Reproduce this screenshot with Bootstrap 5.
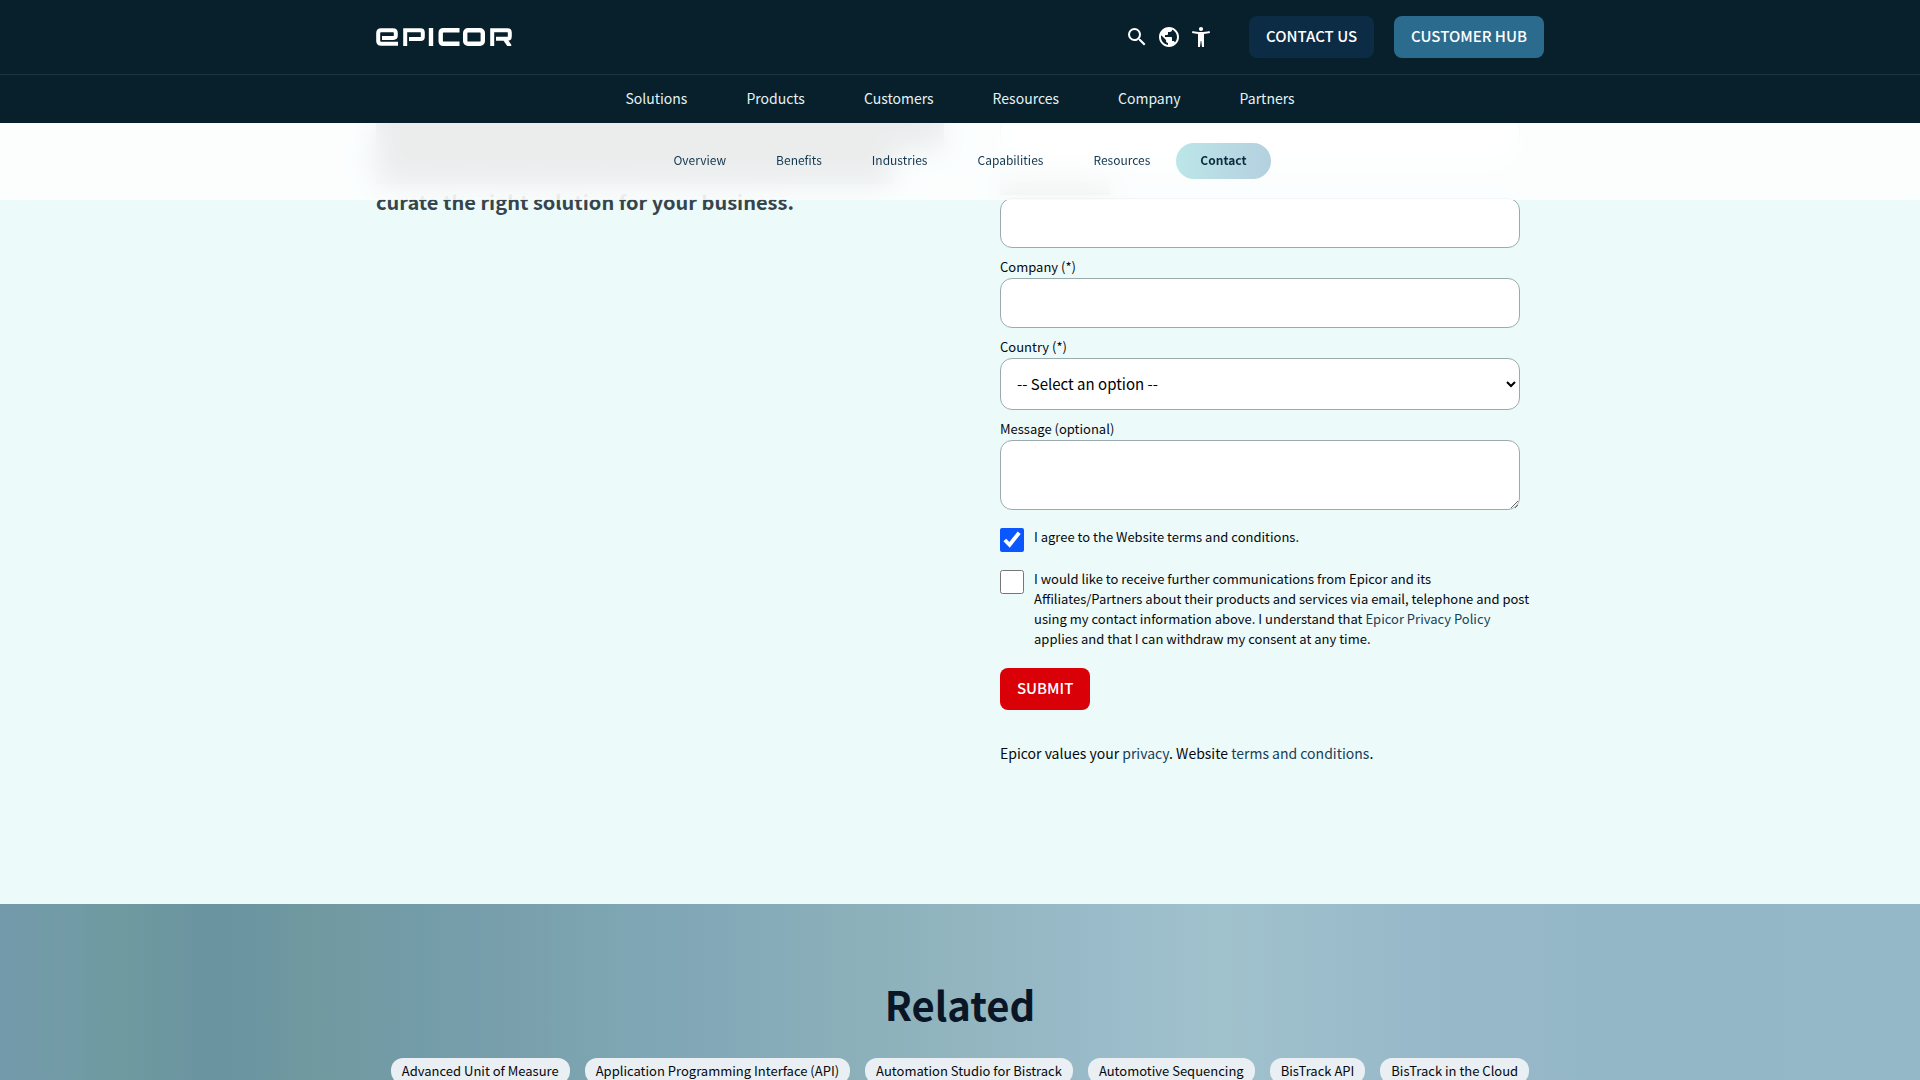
<!DOCTYPE html>
<html lang="en">
<head>
<meta charset="utf-8">
<meta name="viewport" content="width=device-width, initial-scale=1">
<title>Epicor BisTrack | Contact</title>
<link href="https://cdn.jsdelivr.net/npm/bootstrap@5.3.0/dist/css/bootstrap.min.css" rel="stylesheet">
<style>
  body { font-family: "Noto Sans CJK SC", "Noto Sans", sans-serif; font-size: 14px; line-height: 20px; color: #05090c; background: #edfafa; }
  a { color: #163f59; text-decoration: none; }
  .site-wrap { max-width: 1200px; }
  .site-header { background: #07202b; }
  .top-row { height: 75px; border-bottom: 1px solid #1c343f; }
  .icon-btn { width: 24px; height: 24px; color: #fff; }
  .icon-btn svg { display: block; fill: currentColor; }
  .cta { height: 42px; padding: 0 17px; border-radius: 8px; border: 0; font-size: 15px; font-weight: 500; line-height: 40px; color: #fff; }
  button.cta { padding-bottom: 2px; }
  .cta:hover { color: #fff; }
  .cta-navy { background: #0c2c45; }
  .cta-blue { background: #2a6b8e; }
  .cta-red { background: #d90007; }
  .main-menu { height: 48px; padding-bottom: 2px; gap: 59px; font-size: 14px; }
  .main-menu a { color: #e4f2f5; }
  .sub-menu { height: 77px; padding-bottom: 2px; gap: 2px; font-size: 12px; background: rgba(255, 255, 255, .8); backdrop-filter: blur(14px); }
  .sub-menu a { color: #12374e; line-height: 34px; padding: 0 24px 2px; border-radius: 18px; }
  .sub-menu a.active { font-weight: 700; color: #0b2b40; background: linear-gradient(90deg, #bce6e8, #b4d0df); }
  .contact-area { min-height: 904px; }
  .pitch-col { padding-top: 112px; }
  .haze { height: 38px; background: #99a3a5; }
  .haze-short { width: 91%; height: 34px; }
  .haze-label { width: 110px; height: 14px; margin: 13px 0 3px; background: #bcc3c5; }
  .pitch { font-size: 20px; line-height: 36px; font-weight: 700; color: #36444b; }
  .form-col { padding: 118px 40px 0; }
  .field-label { display: block; font-size: 13px; margin-top: 10px; padding-bottom: 2px; line-height: 18px; }
  .field { display: block; width: 100%; height: 50px; background: #fff; border: 1px solid #9aabaf; border-radius: 12px; padding: 0 16px; font-size: 15px; color: #000; }
  select.field { height: 52px; padding: 0 0 2px 12px; }
  textarea.field { height: 70px; padding: 12px 16px; }
  .tick-row { gap: 10px; margin: 18px 0; }
  .tick { width: 24px; height: 24px; margin: 0; flex: none; accent-color: #0b57ff; }
  .tick-label { font-size: 13px; line-height: 20px; margin: -1px -12px 1px 0; }
  .note { font-size: 14px; line-height: 22px; margin-top: 32px; }
  .related { background: linear-gradient(90deg, #7399aa 0, #719ba6 70px, #6f9a9f 120px, #6b94a1 200px, #6b95a1 250px, #70999f 310px, #739ca9 420px, #7a9fad 530px, #7ba4b0 580px, #82a8b8 700px, #8bb0ba 850px, #92b5c0 960px, #9abbc9 1100px, #a0c2cd 1220px, #9bbcca 1340px, #97b8c9 1450px, #94b7c7 1600px, #95b8c8 100%); min-height: 190px; padding-top: 69px; }
  .related h2 { font-size: 40px; line-height: 62px; font-weight: 700; color: #0a1526; margin-bottom: 23px; }
  .tag-list { gap: 15px; }
  .tag-list a { background: #e9eff3; color: #05090c; border-radius: 12px; padding: 3px 11px; font-size: 13px; line-height: 20px; }
</style>
</head>
<body class="vh-100 overflow-hidden">

<header class="fixed-top">
  <div class="site-header">
    <div class="top-row">
      <div class="site-wrap container-fluid h-100 px-3 d-flex align-items-center">
        <a href="#" class="me-auto" aria-label="Epicor">
          <svg class="d-block" width="136" height="18" viewBox="0 0 136 18" fill="none" stroke="#fff" stroke-width="4.4">
            <path d="M22 15.800H5q-2.800 0-2.800-2.800V5q0-2.800 2.800-2.800H17q2.800 0 2.800 2.800v2.500q0 2.400-2.400 2.400H6" stroke-width="4"/>
            <path d="M29.200 18V2.200H44.500q2.300 0 2.300 2.300v4.200q0 2.300-2.300 2.300H33" stroke-width="4"/>
            <path d="M55 0v18"/>
            <path d="M83.500 2.200H67.500q-2.800 0-2.800 2.800v8q0 2.800 2.800 2.800h16"/>
            <rect x="89.200" y="2.200" width="17.600" height="13.600" rx="2.800"/>
            <path d="M116.200 18V2.200H131.500q2.300 0 2.300 2.300v4q0 2.300-2.300 2.300H120M128.500 10.500l5.500 8" stroke-width="4"/>
          </svg>
        </a>
        <div class="d-flex gap-2 me-4 pe-2">
          <button class="icon-btn btn p-0 border-0" aria-label="Search"><svg width="24" height="24" viewBox="0 0 24 24"><path d="M15.500 14h-.79l-.28-.27A6.471 6.471 0 0 0 16 9.500 6.500 6.500 0 1 0 9.500 16c1.610 0 3.090-.59 4.230-1.570l.27.28v.79l5 4.990L20.490 19l-4.990-5zm-6 0C7.010 14 5 11.990 5 9.500S7.010 5 9.500 5 14 7.010 14 9.500 11.990 14 9.500 14z"/></svg></button>
          <button class="icon-btn btn p-0 border-0" aria-label="Language"><svg width="24" height="24" viewBox="0 0 24 24"><path d="M12 2C6.480 2 2 6.480 2 12s4.480 10 10 10 10-4.480 10-10S17.520 2 12 2zm-1 17.930c-3.950-.49-7-3.850-7-7.930 0-.62.080-1.210.21-1.790L9 15v1c0 1.100.9 2 2 2v1.930zm6.900-2.540c-.26-.81-1-1.390-1.900-1.390h-1v-3c0-.55-.45-1-1-1H8v-2h2c.55 0 1-.45 1-1V7h2c1.100 0 2-.9 2-2v-.41c2.930 1.190 5 4.060 5 7.410 0 2.080-.8 3.970-2.100 5.390z"/></svg></button>
          <button class="icon-btn btn p-0 border-0" aria-label="Accessibility"><svg width="24" height="24" viewBox="0 0 24 24"><circle cx="12" cy="4" r="2.100"/><path d="M20.500 6c-2.610.7-5.670 1-8.500 1s-5.890-.3-8.500-1L3 8c1.860.5 4 .83 6 1v13h2l.7-6h.6l.7 6h2V9c2-.17 4.140-.5 6-1l-.5-2z"/></svg></button>
        </div>
        <div class="d-flex ms-1">
          <a href="#" class="btn cta cta-navy me-3">CONTACT US</a>
          <a href="#" class="btn cta cta-blue ms-1">CUSTOMER HUB</a>
        </div>
      </div>
    </div>
    <nav class="main-menu d-flex justify-content-center align-items-center" aria-label="Main">
      <a href="#">Solutions</a><a href="#">Products</a><a href="#">Customers</a><a href="#">Resources</a><a href="#">Company</a><a href="#">Partners</a>
    </nav>
  </div>
  <nav class="sub-menu d-flex justify-content-center align-items-center" aria-label="Page sections">
    <a href="#">Overview</a><a href="#">Benefits</a><a href="#">Industries</a><a href="#">Capabilities</a><a href="#">Resources</a><a href="#contact" class="active">Contact</a>
  </nav>
</header>

<main>
  <section id="contact" class="contact-area">
    <div class="site-wrap container-fluid p-0">
      <div class="row g-0">
        <div class="col-6 px-3 pitch-col">
          <div class="haze"></div>
          <div class="haze haze-short"></div>
          <h3 class="pitch">curate the right solution for your business.</h3>
        </div>
        <form class="col-6 form-col">
          <input class="field" type="tel" aria-label="Phone">
          <div class="haze-label"></div>
          <input class="field" type="email" aria-label="Email">
          <label class="field-label" for="company">Company (*)</label>
          <input class="field" id="company" type="text">
          <label class="field-label" for="country">Country (*)</label>
          <select class="field" id="country"><option>-- Select an option --</option></select>
          <label class="field-label" for="message">Message (optional)</label>
          <textarea class="field" id="message"></textarea>
          <div class="d-flex tick-row">
            <input class="tick" type="checkbox" id="agree" checked>
            <label class="tick-label" for="agree">I agree to the Website terms and conditions.</label>
          </div>
          <div class="d-flex tick-row">
            <input class="tick" type="checkbox" id="news">
            <label class="tick-label" for="news">I would like to receive further communications from Epicor and its Affiliates/Partners about their products and services via email, telephone and post using my contact information above. I understand that <a href="#">Epicor Privacy Policy</a> applies and that I can withdraw my consent at any time.</label>
          </div>
          <button type="submit" class="btn cta cta-red d-block">SUBMIT</button>
          <p class="note">Epicor values your <a href="#">privacy</a>. Website <a href="#">terms and conditions</a>.</p>
        </form>
      </div>
    </div>
  </section>

  <section class="related text-center">
    <h2>Related</h2>
    <div class="tag-list d-flex justify-content-center">
      <a href="#">Advanced Unit of Measure</a><a href="#">Application Programming Interface (API)</a><a href="#">Automation Studio for Bistrack</a><a href="#">Automotive Sequencing</a><a href="#">BisTrack API</a><a href="#">BisTrack in the Cloud</a>
    </div>
  </section>
</main>
<script src="https://cdn.jsdelivr.net/npm/bootstrap@5.3.0/dist/js/bootstrap.bundle.min.js"></script>
</body>
</html>
